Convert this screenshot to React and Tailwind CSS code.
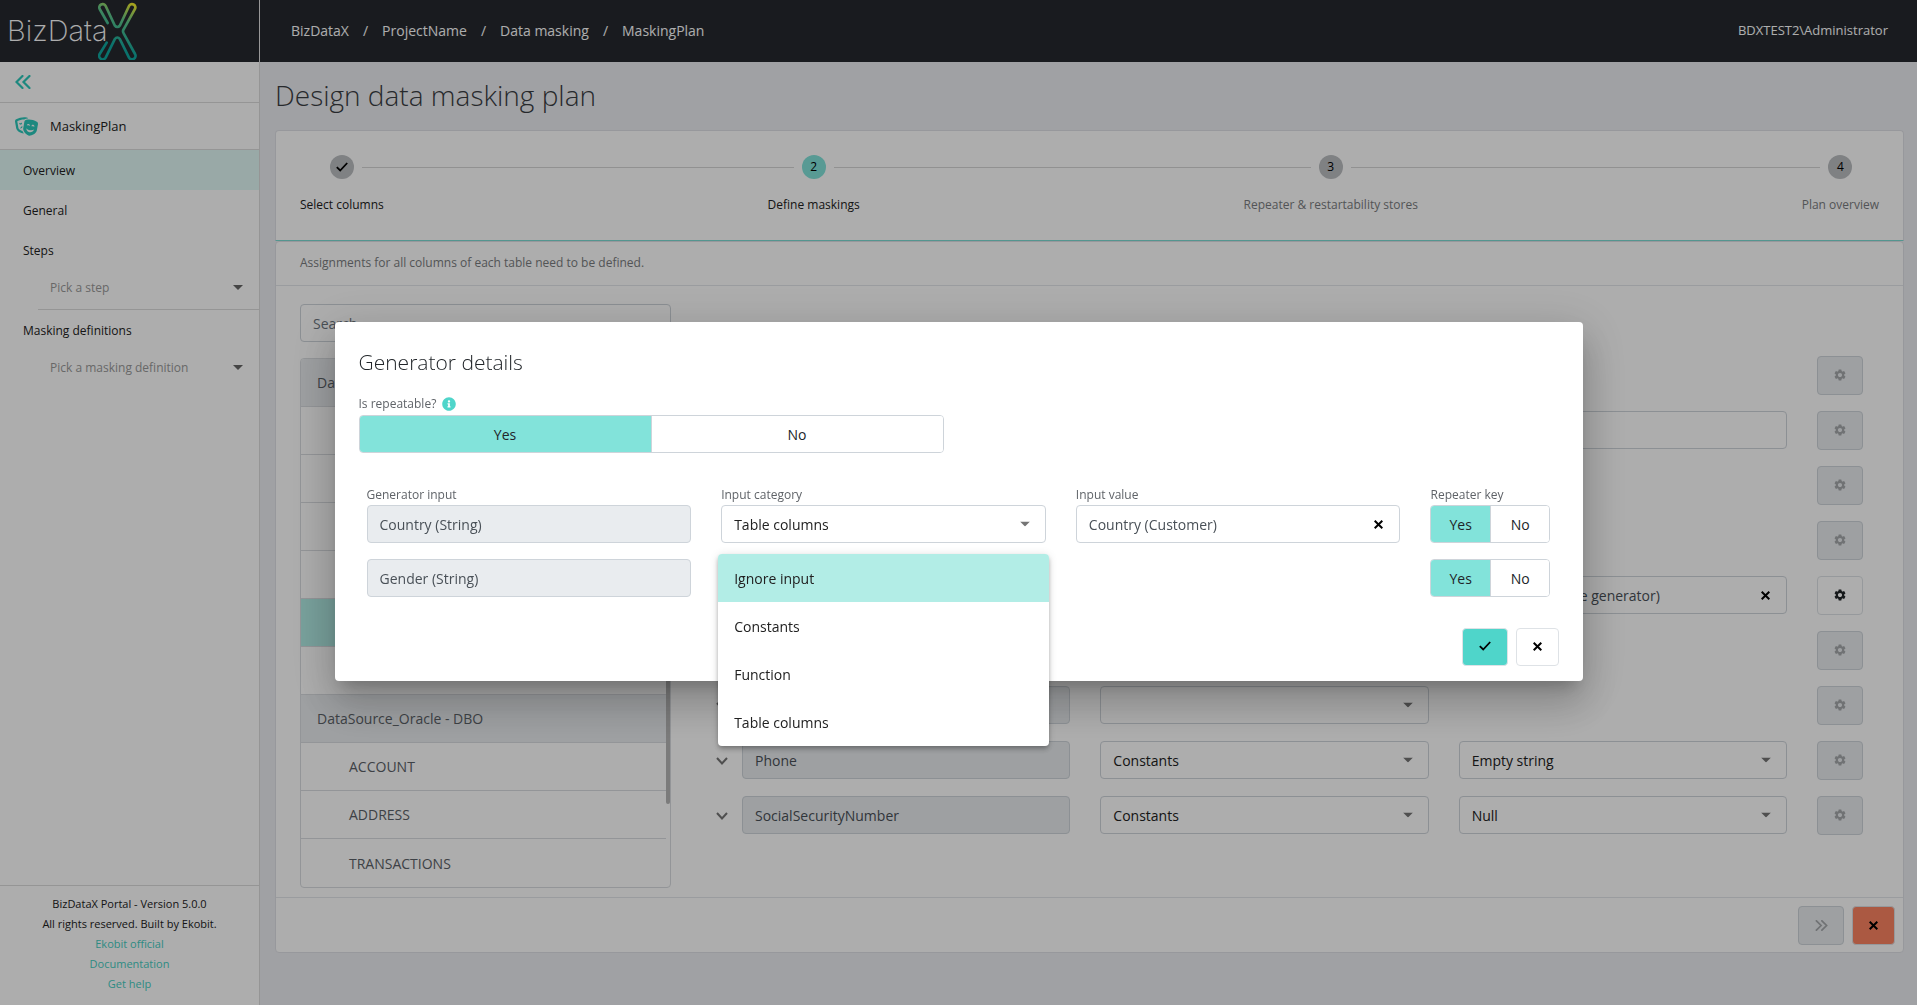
import clsx from 'clsx'
import { FaInfoCircle, FaTheaterMasks } from 'react-icons/fa'
import { MdSettings } from 'react-icons/md'

const STEPS = [
  { label: 'Select columns', done: true },
  { label: 'Define maskings', active: true },
  { label: 'Repeater & restartability stores' },
  { label: 'Plan overview' },
]

const TABLES = [
  { name: 'DataSource_Main - DBO', group: true },
  { name: '' },
  { name: '' },
  { name: '' },
  { name: '' },
  { name: '', selected: true },
  { name: '' },
  { name: 'DataSource_Oracle - DBO', group: true },
  { name: 'ACCOUNT' },
  { name: 'ADDRESS' },
  { name: 'TRANSACTIONS' },
]

const COLUMNS = [
  { name: '', category: '' },
  { name: '', category: '', input: '' },
  { name: '', category: '' },
  { name: '', category: '' },
  { name: '', category: '', input: 'First name (Name generator)', editable: true },
  { name: '', category: '' },
  { name: '', category: '' },
  { name: 'Phone', category: 'Constants', constant: 'Empty string' },
  { name: 'SocialSecurityNumber', category: 'Constants', constant: 'Null' },
]

const Logo = () => (
  <div className="flex w-[259px] items-center pl-[7px]">
    <span className="font-['Inter'] text-[29px] font-extralight text-white">BizData</span>
    <svg className="-ml-[10px] h-[58px] w-10" viewBox="300 0 120 174" fill="none">
      <defs>
        <linearGradient id="logoX" x1="405" y1="6" x2="345" y2="130" gradientUnits="userSpaceOnUse">
          <stop offset="0" stopColor="#f4ee2c" />
          <stop offset="0.4" stopColor="#62c88a" />
          <stop offset="1" stopColor="#0fa8a0" />
        </linearGradient>
      </defs>
      <path
        d="M329 63 L305 21 A10 10 0 0 1 323 12 L350 70 Q358 80 366 70 L393 12 A10 10 0 0 1 411 21 L377 82 Q373 88 377 94 L411 156 A10 10 0 0 1 393 167 L366 112 Q358 101 350 112 L323 167 A10 10 0 0 1 305 156 L326 122"
        stroke="url(#logoX)"
        strokeWidth="8"
        strokeLinecap="round"
      />
    </svg>
  </div>
)

const CloseIcon = () => (
  <svg className="h-[9px] w-[9px]" viewBox="0 0 9 9" fill="none" stroke="currentColor" strokeWidth="2">
    <path d="M0.7 0.7 L8.3 8.3 M8.3 0.7 L0.7 8.3" />
  </svg>
)

const CheckIcon = () => (
  <svg className="h-[10px] w-3" viewBox="0 0 12 10" fill="none" stroke="currentColor" strokeWidth="1.8">
    <path d="M0.8 5.2 L4.2 8.5 L11.2 1" />
  </svg>
)

const DoubleChevron = ({ className }) => (
  <svg className={className} viewBox="0 0 16 14" fill="none" stroke="currentColor" strokeWidth="2.2" strokeLinecap="round">
    <path d="M7.5 1 L1.5 7 L7.5 13 M14.5 1 L8.5 7 L14.5 13" />
  </svg>
)

const Caret = () => (
  <svg
    className="pointer-events-none absolute right-4 top-1/2 h-[5px] w-[10px] -translate-y-1/2 text-[#757575]"
    viewBox="0 0 10 5"
    fill="currentColor"
  >
    <path d="M0 0 H10 L5 5 Z" />
  </svg>
)

const Select = ({ value, label, id }) => (
  <div className="relative h-[38px] min-w-0">
    <select
      id={id}
      aria-label={label}
      defaultValue={value}
      className="h-full w-full appearance-none rounded border border-[#ced4da] bg-white pl-3 text-[14px] text-[#212121]"
    >
      <option>{value}</option>
    </select>
    <Caret />
  </div>
)

const Field = ({ value, label, id }) => (
  <input
    id={id}
    aria-label={label}
    defaultValue={value}
    disabled
    className="h-[38px] w-full min-w-0 rounded border border-[#ced4da] bg-[#e9ecef] px-3 text-[14px] text-[#495057]"
  />
)

const ClearableInput = ({ value, label, id }) => (
  <div className="flex h-[38px] min-w-0 items-center rounded border border-[#ced4da] bg-white pl-3 pr-4 text-[14px]">
    <input id={id} aria-label={label} defaultValue={value} className="w-full min-w-0 text-[#495057] outline-none" />
    {value && (
      <button type="button" aria-label="Clear" className="text-black">
        <CloseIcon />
      </button>
    )}
  </div>
)

const YesNo = ({ className, label }) => (
  <div
    role="group"
    aria-label={label}
    className={clsx('flex h-[38px] overflow-hidden rounded border border-[#ced4da] text-[14px] text-[#212529]', className)}
  >
    <button type="button" aria-pressed="true" className="flex-1 bg-[#82e3da]">Yes</button>
    <button type="button" aria-pressed="false" className="flex-1 border-l border-[#ced4da] bg-white">No</button>
  </div>
)

const NavSelect = ({ label, last }) => (
  <div className={clsx('relative ml-[38px] h-10', !last && 'border-b border-[#dcdcdc]')}>
    <select aria-label={label} className="h-full w-full appearance-none pb-1 pl-3 text-[12px] text-[#9a9a9a]">
      <option>{label}</option>
    </select>
    <svg className="pointer-events-none absolute right-4 top-[15px] h-[5px] w-[10px] text-[#666]" viewBox="0 0 10 5" fill="currentColor">
      <path d="M0 0 H10 L5 5 Z" />
    </svg>
  </div>
)

const Sidebar = () => (
  <aside className="flex w-[260px] shrink-0 flex-col border-r border-[#dcdcdc] bg-white text-[#212121]">
    <div className="flex h-[41px] items-center border-b border-[#dcdcdc] px-[15px]">
      <button type="button" aria-label="Collapse menu" className="text-[#2cc9bb]">
        <DoubleChevron className="h-[14px] w-4" />
      </button>
    </div>
    <div className="flex h-[47px] items-center gap-3 border-b border-[#dcdcdc] pl-[15px]">
      <FaTheaterMasks className="h-[23px] w-[23px] text-[#2cc9bb]" />
      <span className="pt-0.5 text-[13px]">MaskingPlan</span>
    </div>
    <nav className="flex flex-col text-[12px]">
      <a href="#overview" className="flex h-10 items-center bg-[#e2faf7] pt-0.5 pl-[23px]">Overview</a>
      <a href="#general" className="flex h-10 items-center pt-0.5 pl-[23px]">General</a>
      <a href="#steps" className="flex h-10 items-center pt-0.5 pl-[23px]">Steps</a>
      <NavSelect label="Pick a step" />
      <a href="#definitions" className="flex h-10 items-center pt-0.5 pl-[23px]">Masking definitions</a>
      <NavSelect label="Pick a masking definition" last />
    </nav>
    <footer className="mt-auto flex h-[120px] flex-col items-center border-t border-[#dcdcdc] pt-2 text-[11px] leading-5">
      <span>BizDataX Portal - Version 5.0.0</span>
      <span>All rights reserved. Built by Ekobit.</span>
      <a href="#ekobit" className="text-[#45cec2]">Ekobit official</a>
      <a href="#docs" className="text-[#45cec2]">Documentation</a>
      <a href="#help" className="text-[#45cec2]">Get help</a>
    </footer>
  </aside>
)

const Stepper = () => (
  <ol className="flex items-start rounded-t border border-[#dfe1e6] border-b-[#7ddcd3] bg-white pt-6 pb-[25px]">
    {STEPS.map((step, i) => (
      <li key={step.label} className={clsx('flex', i > 0 && 'flex-auto')}>
        {i > 0 && <span className="mt-3 h-px flex-1 bg-[#d6d6d6]" />}
        <div className="flex flex-col items-center gap-4">
          <div className="flex w-full items-center gap-2">
            <span className={clsx('h-px flex-1', i > 0 && 'bg-[#d6d6d6]')} />
            <span
              className={clsx(
                'flex h-6 w-6 items-center justify-center rounded-full text-[12px] text-black',
                step.active ? 'bg-[#82e3da]' : 'bg-[#bbbec1]'
              )}
            >
              {step.done ? <CheckIcon /> : i + 1}
            </span>
            <span className={clsx('h-px flex-1', i < STEPS.length - 1 && 'bg-[#d6d6d6]')} />
          </div>
          <span className={clsx('px-6 text-[12px] leading-5', step.done || step.active ? 'text-[#212121]' : 'text-[#7a7d80]')}>
            {step.label}
          </span>
        </div>
      </li>
    ))}
  </ol>
)

const TableList = () => (
  <div className="flex w-[371px] shrink-0 flex-col gap-4">
    <input
      aria-label="Search"
      placeholder="Search..."
      className="h-[38px] rounded border border-[#ced4da] px-3 text-[14px] placeholder:text-[#6c757d]"
    />
    <div className="relative overflow-hidden rounded border border-[#d9dce0]">
      <ul className="pr-1 text-[14px] text-[#5b6167]">
        {TABLES.map((table, i) => (
          <li
            key={i}
            className={clsx(
              'flex h-12 items-center border-b border-[#d9dce0] last:border-b-0',
              table.group ? 'bg-[#e9ecef] pl-4' : 'pl-12',
              table.selected && 'bg-[#b2ede6]'
            )}
          >
            {table.name}
          </li>
        ))}
      </ul>
      <span className="absolute right-0 top-0 h-[445px] w-1 rounded bg-[#b5b5b5]" />
    </div>
  </div>
)

const ColumnRow = ({ column, index }) => (
  <div className="flex items-center">
    <button type="button" aria-label="Expand" className="mr-[14px] w-3 text-[#757575]">
      <svg className="h-2 w-3" viewBox="0 0 12 8" fill="none" stroke="currentColor" strokeWidth="2">
        <path d="M1 1 L6 6.5 L11 1" />
      </svg>
    </button>
    <div className="grid flex-1 grid-cols-[1fr_1fr_1fr_46px] gap-[30px]">
      <Field value={column.name} label={`Column ${index}`} />
      <Select value={column.category} label={`Category ${index}`} />
      {column.constant ? (
        <Select value={column.constant} label={`Constant ${index}`} />
      ) : column.input !== undefined ? (
        <ClearableInput value={column.input} label={`Generator ${index}`} />
      ) : (
        <span />
      )}
      <button
        type="button"
        aria-label="Settings"
        disabled={!column.editable}
        className={clsx(
          'flex h-[39px] items-center justify-center rounded border pb-0.5',
          column.editable ? 'border-[#dee2e6] bg-white text-[#212529]' : 'border-[#ced4da] bg-[#e9ecef] text-[#a6a9ac]'
        )}
      >
        <MdSettings className="h-[14px] w-[14px]" />
      </button>
    </div>
  </div>
)

const INPUTS = ['Country (String)', 'Gender (String)']
const CATEGORIES = ['Ignore input', 'Constants', 'Function', 'Table columns']

const CategoryMenu = () => (
  <ul
    role="listbox"
    aria-label="Input category"
    className="absolute -left-[3px] -right-[3px] -top-[5px] z-10 overflow-hidden rounded bg-white text-[14px] text-[#212121] shadow-[0_2px_4px_-1px_rgba(0,0,0,0.2),0_4px_5px_0_rgba(0,0,0,0.14),0_1px_10px_0_rgba(0,0,0,0.12)]"
  >
    {CATEGORIES.map((item, i) => (
      <li key={item} role="option" aria-selected={i === 0} className={clsx('flex h-12 items-center px-4', i === 0 && 'bg-[#b2ede6]')}>
        {item}
      </li>
    ))}
  </ul>
)

const GeneratorDialog = () => (
  <div
    role="dialog"
    aria-labelledby="dialog-title"
    className="w-[1248px] max-w-[90vw] rounded bg-white px-6 pt-6 pb-[15px] shadow-[0_11px_15px_-7px_rgba(0,0,0,0.2),0_24px_38px_3px_rgba(0,0,0,0.14),0_9px_46px_8px_rgba(0,0,0,0.12)]"
  >
    <h2 id="dialog-title" className="text-[21px] leading-8 font-light text-[#212529]">Generator details</h2>
    <div className="mt-4 flex items-center gap-1.5 text-[12px] leading-5 text-[#5f6368]">
      Is repeatable? <FaInfoCircle className="h-[14px] w-[14px] text-[#4fd5ca]" />
    </div>
    <YesNo label="Is repeatable?" className="mt-px w-[585px]" />

    <div className="mt-8 grid grid-cols-[1fr_1fr_1fr_120px] gap-x-[30px] px-2 text-[12px] leading-5 text-[#5f6368]">
      <label htmlFor="input-0">Generator input</label>
      <label htmlFor="category-0">Input category</label>
      <label htmlFor="value-0">Input value</label>
      <span>Repeater key</span>
    </div>
    <div className="grid grid-cols-[1fr_1fr_1fr_120px] gap-x-[30px] gap-y-4 px-2">
      <Field id="input-0" value={INPUTS[0]} />
      <Select id="category-0" value="Table columns" />
      <ClearableInput id="value-0" value="Country (Customer)" />
      <YesNo label="Repeater key for country" />
      <Field label="Generator input" value={INPUTS[1]} />
      <div className="relative">
        <CategoryMenu />
      </div>
      <span />
      <YesNo label="Repeater key for gender" />
    </div>

    <div className="mt-[31px] flex justify-end gap-2">
      <button type="button" aria-label="Confirm" className="flex h-[38px] w-[46px] items-center justify-center rounded border border-[#dee2e6] bg-[#4fd5ca] pb-0.5 text-black">
        <CheckIcon />
      </button>
      <button type="button" aria-label="Cancel" className="flex h-[38px] w-[43px] items-center justify-center rounded border border-[#dee2e6] bg-white pb-0.5 text-black">
        <CloseIcon />
      </button>
    </div>
  </div>
)

const CRUMBS = ['BizDataX', 'ProjectName', 'Data masking', 'MaskingPlan']

const App = () => (
  <div className="flex min-h-screen flex-col bg-[#ecedf2] font-['Open_Sans',sans-serif]">
    <header className="flex h-[62px] bg-[#25292f] text-white">
      <Logo />
      <div className="flex flex-1 items-center justify-between border-l border-[#e0e0e0] pr-[29px] pb-0.5 pl-[31px]">
        <nav className="flex gap-[14px] text-[14px]">
          {CRUMBS.map((crumb, i) => (
            <span key={crumb} className="flex gap-[14px]">
              {i > 0 && <span>/</span>}
              <a href={`#${crumb}`}>{crumb}</a>
            </span>
          ))}
        </nav>
        <span className="pt-0.5 text-[13px]">BDXTEST2\Administrator</span>
      </div>
    </header>

    <div className="flex flex-1">
      <Sidebar />
      <main className="min-w-0 flex-1 pr-[13px] pl-[15px]">
        <h1 className="flex h-[68px] items-center pb-0.5 text-[28px] font-light text-[#3a3d42]">Design data masking plan</h1>
        <Stepper />
        <section className="rounded border border-[#dfe1e6] bg-white">
          <p className="border-b border-[#e4e6ea] px-6 pt-[11px] pb-3 text-[12px] leading-5 text-[#7a7d80]">
            Assignments for all columns of each table need to be defined.
          </p>
          <div className="flex gap-[45px] pt-[18px] pr-10 pb-[9px] pl-6">
            <TableList />
            <div className="mt-[52px] flex min-w-0 flex-1 flex-col gap-4">
              {COLUMNS.map((column, i) => (
                <ColumnRow key={i} column={column} index={i + 1} />
              ))}
            </div>
          </div>
          <div className="flex justify-end gap-2 border-t border-[#e4e6ea] px-2 pt-2 pb-[7px]">
            <button type="button" aria-label="Next" disabled className="flex h-[39px] w-[46px] items-center justify-center rounded border border-[#ced4da] bg-[#e9ecef] text-[#a6a9ac]">
              <DoubleChevron className="h-[11px] w-[13px] rotate-180" />
            </button>
            <button type="button" aria-label="Close" className="flex h-[39px] w-[43px] items-center justify-center rounded border border-[#dee2e6] bg-[#fc8462] text-black">
              <CloseIcon />
            </button>
          </div>
        </section>
      </main>
    </div>

    <div className="fixed inset-0 z-40 flex items-center justify-center bg-black/32 pb-0.5">
      <GeneratorDialog />
    </div>
  </div>
)

export default App
